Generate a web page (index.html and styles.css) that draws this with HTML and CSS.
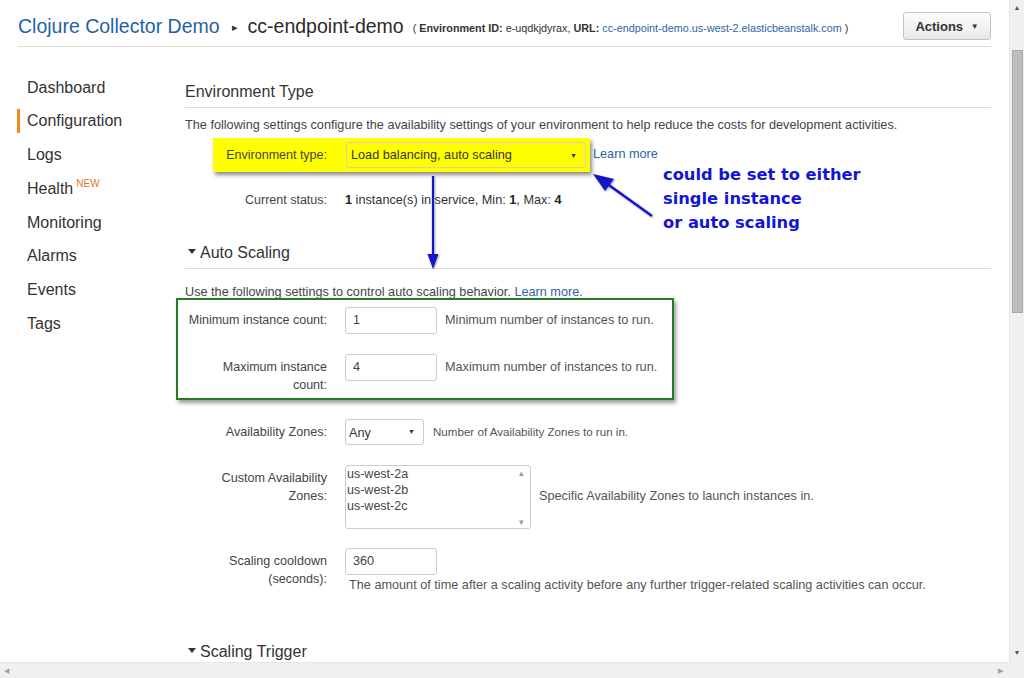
FILE: index.html
```html
<!DOCTYPE html>
<html>
<head>
<meta charset="utf-8">
<link rel="stylesheet" href="styles.css">
</head>
<body>
<div class="window">
  <div class="main">
    <header class="topbar">
      <span class="app-name">Clojure Collector Demo</span>
      <span class="crumb-caret">&#9656;</span>
      <span class="env-name">cc-endpoint-demo</span>
      <span class="env-meta">( <b>Environment ID:</b> e-uqdkjdyrax, <b>URL:</b> <a class="link">cc-endpoint-demo.us-west-2.elasticbeanstalk.com</a> )</span>
      <button class="actions">Actions <span class="caret">&#9660;</span></button>
    </header>
    <div class="layout">
      <nav class="sidebar">
        <div class="nav-item">Dashboard</div>
        <div class="nav-item active">Configuration</div>
        <div class="nav-item">Logs</div>
        <div class="nav-item">Health<sup class="new">NEW</sup></div>
        <div class="nav-item">Monitoring</div>
        <div class="nav-item">Alarms</div>
        <div class="nav-item">Events</div>
        <div class="nav-item">Tags</div>
      </nav>
      <section class="content">
        <h2 class="section-title first">Environment Type</h2>
        <p class="desc">The following settings configure the availability settings of your environment to help reduce the costs for development activities.</p>
        <div class="row hl-line">
          <div class="highlight">
            <span class="hl-label">Environment type:</span>
            <div class="select env-select"><span>Load balancing, auto scaling</span><span class="sel-arrow">&#9660;</span></div>
          </div>
          <a class="link learn">Learn more</a>
        </div>
        <div class="row status-row">
          <span class="label">Current status:</span>
          <span class="value"><b>1</b> instance(s) in service, Min: <b>1</b>, Max: <b>4</b></span>
        </div>

        <h2 class="section-title toggle auto"><span class="tri"></span>Auto Scaling</h2>
        <p class="desc desc2">Use the following settings to control auto scaling behavior. <a class="link">Learn more.</a></p>
        <div class="row field min-row">
          <span class="label one-line">Minimum instance count:</span>
          <div class="input">1</div>
          <span class="help">Minimum number of instances to run.</span>
        </div>
        <div class="row field max-row">
          <span class="label">Maximum instance count:</span>
          <div class="input">4</div>
          <span class="help">Maximum number of instances to run.</span>
        </div>
        <div class="row field az-row lower">
          <span class="label">Availability Zones:</span>
          <div class="select az-select"><span>Any</span><span class="sel-arrow">&#9660;</span></div>
          <span class="help help-az">Number of Availability Zones to run in.</span>
        </div>
        <div class="row field custom-row lower">
          <span class="label">Custom Availability Zones:</span>
          <div class="listbox">
            <div class="options">
              <div>us-west-2a</div>
              <div>us-west-2b</div>
              <div>us-west-2c</div>
            </div>
            <div class="lb-scroll"><span>&#9652;</span><span>&#9662;</span></div>
          </div>
          <span class="help help-custom">Specific Availability Zones to launch instances in.</span>
        </div>
        <div class="row field cool-row lower">
          <span class="label">Scaling cooldown (seconds):</span>
          <div class="stack">
            <div class="input">360</div>
            <span class="help help-below">The amount of time after a scaling activity before any further trigger-related scaling activities can occur.</span>
          </div>
        </div>
        <h2 class="section-title toggle trigger"><span class="tri"></span>Scaling Trigger</h2>
      </section>
    </div>

    <div class="green-box"></div>
    <svg class="annot-arrows" width="1009" height="662" viewBox="0 0 1009 662">
      <defs>
        <filter id="sh" x="-20%" y="-20%" width="140%" height="140%">
          <feDropShadow dx="1" dy="1" stdDeviation="1" flood-color="#000" flood-opacity="0.35"/>
        </filter>
      </defs>
      <g fill="#1212c8" stroke="#1212c8" filter="url(#sh)">
        <line x1="433" y1="176" x2="433" y2="256" stroke-width="2.2"/>
        <polygon points="427.5,254 438.5,254 433,269" stroke="none"/>
        <line x1="652" y1="216" x2="606" y2="183" stroke-width="2.4"/>
        <polygon points="593,174 614,179 605,191" stroke="none"/>
      </g>
    </svg>
    <div class="annot-text">could be set to either<br>single instance<br>or auto scaling</div>
  </div>
  <div class="vscroll">
    <span class="sb-arrow up">&#9650;</span>
    <div class="thumb"></div>
    <span class="sb-arrow down">&#9660;</span>
  </div>
  <div class="hscroll">
    <span class="sb-arrow left">&#9664;</span>
    <span class="sb-arrow right">&#9654;</span>
  </div>
  <div class="corner"></div>
</div>
</body>
</html>
```

FILE: styles.css
```css
* { box-sizing: border-box; }
html, body { margin: 0; padding: 0; background: #fff; }
body {
  font-family: "Liberation Sans", Arial, sans-serif;
  color: #444;
  width: 1024px;
  height: 678px;
  overflow: hidden;
}
.window {
  display: grid;
  grid-template-columns: 1009px 15px;
  grid-template-rows: 662px 16px;
  width: 1024px;
  height: 678px;
}
.main {
  position: relative;
  overflow: hidden;
  background: #fff;
}
.link { color: #2f63a6; text-decoration: none; }

/* header */
.topbar {
  display: flex;
  align-items: center;
  height: 47px;
  margin: 0 18px;
  padding-top: 6px;
  border-bottom: 1px solid #dcdcdc;
  white-space: nowrap;
}
.app-name { font-size: 19.5px; color: #1f5fa8; }
.crumb-caret { font-size: 11px; color: #333; margin: 2px 10px 0 12px; }
.env-name { font-size: 19.5px; color: #2a2a2a; }
.env-meta { font-size: 10.8px; color: #333; margin-left: 9px; margin-top: 4px; }
.env-meta b { font-weight: bold; }
.env-meta .link { color: #2f63a6; }
.actions {
  margin-left: auto;
  width: 88px;
  height: 28px;
  border: 1px solid #c4c4c4;
  border-radius: 3px;
  background: linear-gradient(#fdfdfd, #e9e9e9);
  font-family: "Liberation Sans", Arial, sans-serif;
  font-size: 13px;
  font-weight: bold;
  color: #333;
  padding: 0;
}
.actions .caret { font-size: 8px; margin-left: 4px; vertical-align: 2px; }

/* layout */
.layout { display: flex; }
.sidebar {
  width: 185px;
  flex: none;
  padding: 28.5px 0 0 17px;
}
.nav-item {
  font-size: 16px;
  line-height: 24px;
  height: 24px;
  margin-bottom: 9.8px;
  padding-left: 10px;
  color: #333;
  white-space: nowrap;
}
.nav-item.active { border-left: 3px solid #f08c1f; padding-left: 7px; }
.new {
  font-size: 10px;
  color: #e8771e;
  margin-left: 3px;
  vertical-align: 7px;
  line-height: 0;
}

.content {
  flex: 1;
  margin-right: 18px;
  min-width: 0;
}
.section-title {
  font-size: 16px;
  font-weight: normal;
  color: #333;
  line-height: 20px;
  margin: 0;
  padding-bottom: 5px;
  border-bottom: 1px solid #dcdcdc;
  white-space: nowrap;
}
.section-title.first { margin-top: 35px; }
.section-title.toggle { padding-left: 3px; }
.tri {
  display: inline-block;
  width: 0;
  height: 0;
  border-left: 4.5px solid transparent;
  border-right: 4.5px solid transparent;
  border-top: 5px solid #333;
  margin-right: 4px;
  vertical-align: 4px;
}
.section-title.auto { margin-top: 34.5px; }
.section-title.trigger { margin-top: 47px; border-bottom: none; }
.desc {
  font-size: 12.7px;
  line-height: 16px;
  margin: 9px 0 0;
  color: #444;
  white-space: nowrap;
}
.desc2 { margin-top: 14.5px; }

.row {
  display: flex;
  align-items: flex-start;
  font-size: 12.7px;
  white-space: nowrap;
}
.label {
  width: 142px;
  flex: none;
  text-align: right;
  color: #444;
  line-height: 18px;
  padding-top: 4px;
  white-space: normal;
  font-size: 12.5px;
}
.label.one-line { white-space: nowrap; display: flex; justify-content: flex-end; }
.value { margin-left: 18px; line-height: 18px; padding-top: 4px; color: #333; }
.value b { color: #222; }

.hl-line { margin-top: 5px; align-items: center; }
.highlight {
  display: flex;
  align-items: center;
  margin-left: 28px;
  background: #ffff00;
  padding: 4px 4px 4px 0;
  box-shadow: 2px 3px 4px rgba(0,0,0,0.45);
}
.hl-label { width: 114px; text-align: right; color: #444; font-size: 12.5px; }
.select {
  display: flex;
  align-items: center;
  justify-content: space-between;
  height: 26px;
  border: 1px solid #d2d2b0;
  border-radius: 3px;
  padding: 0 8px 0 4px;
  color: #333;
}
.env-select { width: 240px; margin-left: 19px; }
.sel-arrow { font-size: 7px; color: #333; }
.learn { margin-left: 3px; margin-top: -3px; }
.status-row { margin-top: 14.5px; }

.input {
  width: 92px;
  height: 27px;
  flex: none;
  margin-left: 18px;
  border: 1px solid #ccc;
  border-radius: 3px;
  padding: 0 7px;
  line-height: 25px;
  color: #444;
  background: #fff;
}
.help { margin-left: 8px; line-height: 27px; color: #555; }
.min-row { margin-top: 7px; }
.max-row { margin-top: 20px; }
.max-row .label { padding-left: 30px; }
.lower { font-size: 12.7px; }
.lower .label { font-size: 12.6px; }
.az-row { margin-top: 25px; }
.az-select { width: 79px; margin-left: 18px; background: #fff; border-color: #ccc; padding-left: 3px; }
.az-select span:first-child { margin-top: 3px; }
.help-az { margin-left: 9px; line-height: 26px; font-size: 11.6px; }
.custom-row { margin-top: 20px; align-items: center; }
.custom-row .label { align-self: flex-start; padding-left: 18px; }
.listbox {
  display: flex;
  width: 186px;
  height: 64px;
  margin-left: 18px;
  border: 1px solid #ccc;
  border-radius: 3px;
  flex: none;
}
.options { flex: 1; padding: 0 0 0 1px; line-height: 16px; color: #444; font-size: 12.5px; }
.lb-scroll {
  width: 17px;
  display: flex;
  flex-direction: column;
  justify-content: space-between;
  align-items: center;
  font-size: 9px;
  color: #999;
  padding: 2px 0 1px;
  line-height: 10px;
}
.help-custom { margin-left: 8px; }
.cool-row { margin-top: 19px; }
.cool-row .label { padding-left: 40px; }
.stack { display: flex; flex-direction: column; }
.help-below { margin-left: 22px; line-height: 20px; margin-top: 0; }

/* annotation overlays */
.green-box {
  position: absolute;
  left: 176px;
  top: 298px;
  width: 498px;
  height: 102px;
  border: 2px solid #257a25;
  box-shadow: 2px 3px 4px rgba(0,0,0,0.4);
  pointer-events: none;
}
.annot-arrows { position: absolute; left: 0; top: 0; pointer-events: none; }
.annot-text {
  position: absolute;
  left: 663px;
  top: 163px;
  font-family: "DejaVu Sans", Verdana, sans-serif;
  font-weight: bold;
  font-size: 16.3px;
  line-height: 24px;
  color: #1414d4;
  white-space: nowrap;
}

/* fake browser scrollbars */
.vscroll {
  background: #f0f0f0;
  display: flex;
  flex-direction: column;
  align-items: center;
  border-left: 1px solid #e6e6e6;
}
.sb-arrow { font-size: 7px; color: #505050; line-height: 10px; }
.sb-arrow.up { margin-top: 3px; }
.thumb {
  width: 11px;
  height: 263px;
  margin-top: 37px;
  background: #bdbdbd;
  border: 1px solid #a9a9a9;
}
.sb-arrow.down { margin-top: auto; margin-bottom: 4px; }
.hscroll {
  background: #f0f0f0;
  border-top: 1px solid #e6e6e6;
  display: flex;
  align-items: center;
  justify-content: space-between;
  padding: 0 6px 0 4px;
}
.hscroll .sb-arrow { color: #a0a0a0; }
.corner { background: #f0f0f0; }
```
